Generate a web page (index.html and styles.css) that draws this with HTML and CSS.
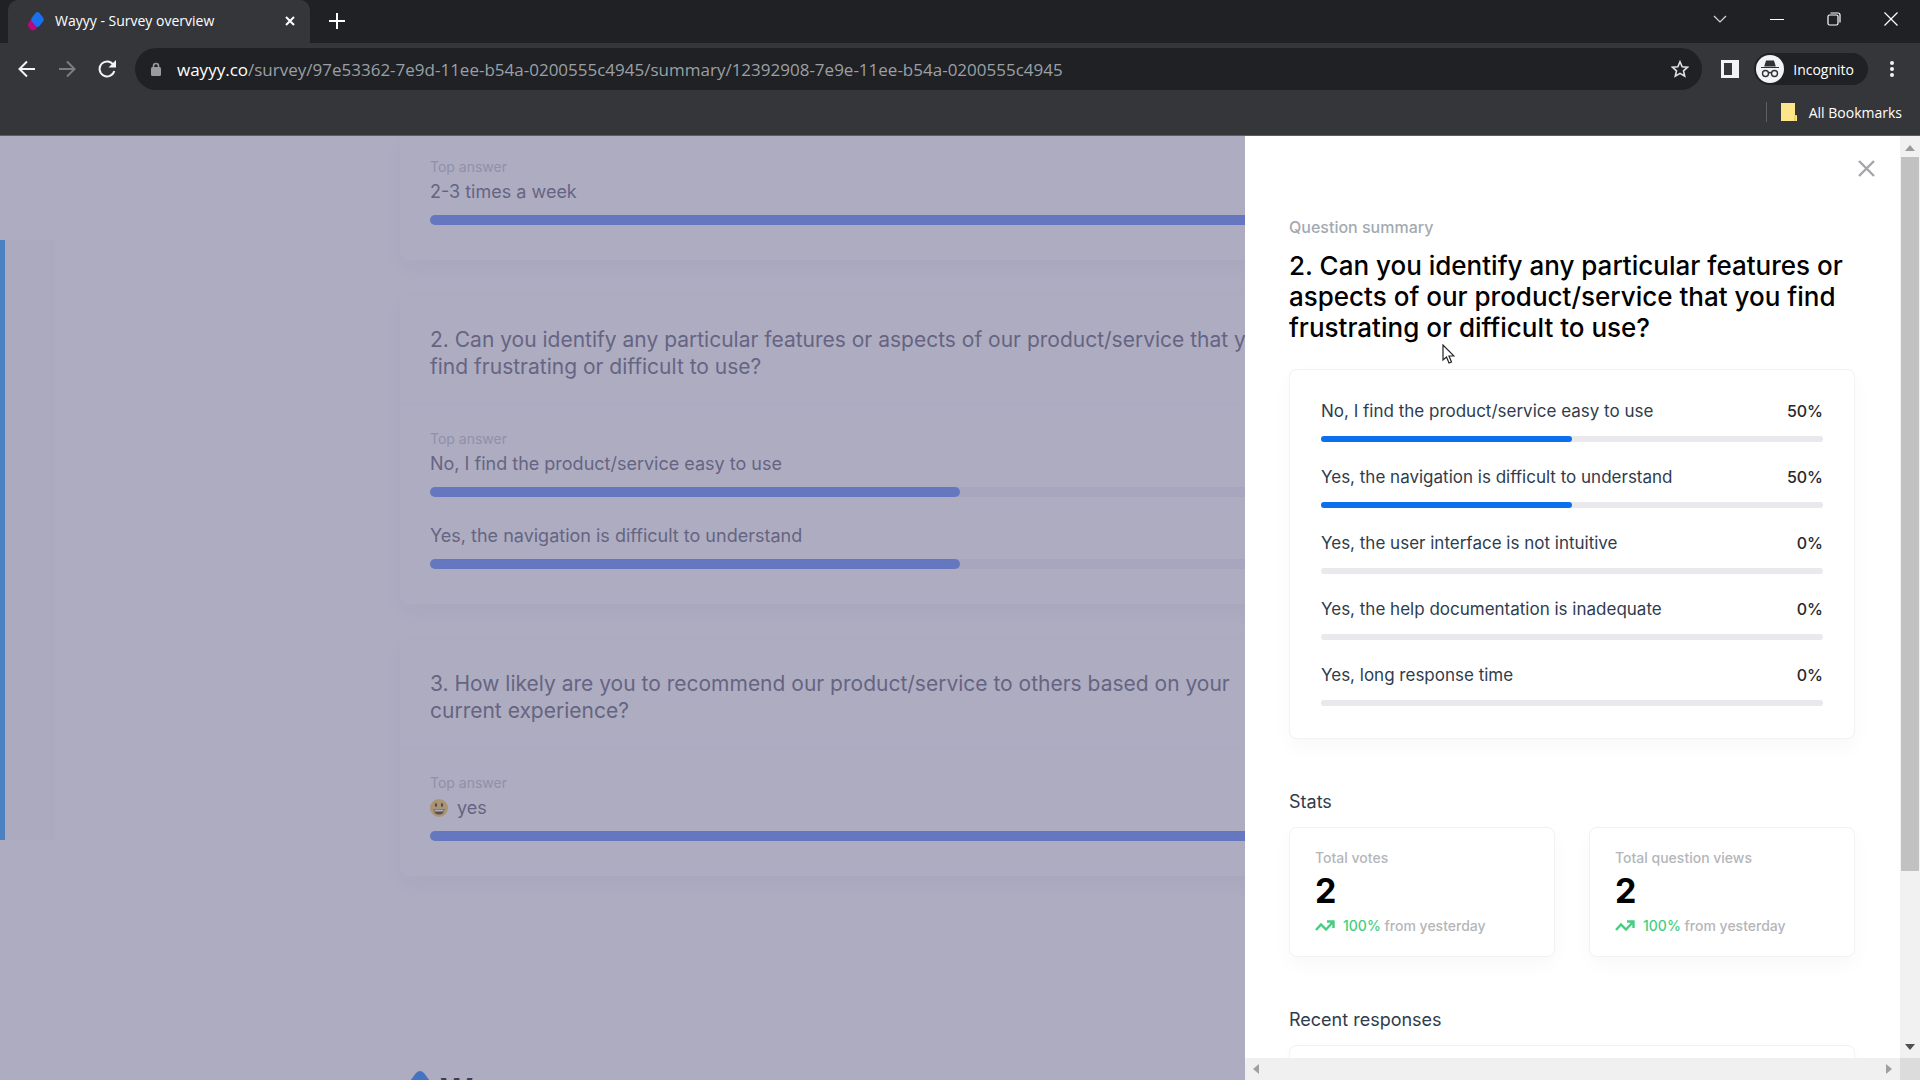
FILE: index.html
```html
<!DOCTYPE html>
<html lang="en">
<head>
<meta charset="utf-8">
<title>Wayyy - Survey overview</title>
<link rel="stylesheet" href="styles.css">
</head>
<body>
<header class="browser">
  <div class="tabs">
    <div class="tab">
      <svg class="tab-icon" width="20" height="20" viewBox="0 0 20 20"><path d="M2 13 L6 7 L12 14 L10 18 Q8 20 6 19 Q2 17 2 13Z" fill="#c2047f"/><path d="M9.500 2 Q11.500 0 13.500 2 L17 6.500 Q18.500 8.500 17 10.500 L13.500 15 Q11.500 17 9.500 15 L6 10.500 Q4.500 8.500 6 6.500Z" fill="#1a6ff0"/></svg>
      <span class="tab-title">Wayyy - Survey overview</span>
      <button class="icon-btn" aria-label="Close tab"><svg width="10" height="10" viewBox="0 0 10 10" stroke="#fff" stroke-width="2"><path d="M1 1l8 8M9 1l-8 8"/></svg></button>
    </div>
    <button class="icon-btn new-tab" aria-label="New tab"><svg width="16" height="16" viewBox="0 0 16 16" stroke="#fff" stroke-width="2"><path d="M8 0v16M0 8h16"/></svg></button>
    <div class="window-controls">
      <button class="icon-btn" aria-label="Search tabs"><svg width="14" height="14" viewBox="0 0 14 14" fill="none" stroke="#d8d8d8" stroke-width="1.2"><path d="M1 4l6 6 6-6"/></svg></button>
      <button class="icon-btn" aria-label="Minimize"><svg width="14" height="14" viewBox="0 0 14 14" stroke="#fff"><path d="M0 7.500h14"/></svg></button>
      <button class="icon-btn" aria-label="Restore"><svg width="14" height="14" viewBox="0 0 14 14" fill="none" stroke="#fff" stroke-width="1.200"><rect x="1" y="3" width="10" height="10" rx="1.500"/><path d="M3.500 1H11q2 0 2 2v7.500"/></svg></button>
      <button class="icon-btn" aria-label="Close"><svg width="14" height="14" viewBox="0 0 14 14" stroke="#fff" stroke-width="1.200"><path d="M.5.5l13 13M13.500.5l-13 13"/></svg></button>
    </div>
  </div>
  <div class="toolbar">
    <button class="icon-btn" aria-label="Back"><svg width="18" height="18" viewBox="0 0 18 18" fill="none" stroke="#f1f3f4" stroke-width="2"><path d="M17 9H2M9 1.500L1.500 9 9 16.500"/></svg></button>
    <button class="icon-btn" aria-label="Forward"><svg width="18" height="18" viewBox="0 0 18 18" fill="none" stroke="#7c7d80" stroke-width="2"><path d="M1 9h15M9 1.500L16.500 9 9 16.500"/></svg></button>
    <button class="icon-btn" aria-label="Reload"><svg width="18" height="18" viewBox="0 0 18 18" fill="none" stroke="#f1f3f4" stroke-width="2"><path d="M15.500 5A7.500 7.500 0 1 0 16.300 11"/><path d="M18 0v7.500h-7.500z" fill="#f1f3f4" stroke="none"/></svg></button>
    <div class="omnibox">
      <svg width="10" height="14" viewBox="0 0 10 14"><rect y="5" width="10" height="9" rx="1.500" fill="#9a9b9e"/><path d="M2.500 6V4a2.500 2.500 0 0 1 5 0v2" fill="none" stroke="#9a9b9e" stroke-width="1.600"/></svg>
      <span class="url"><b>wayyy.co</b>/survey/97e53362-7e9d-11ee-b54a-0200555c4945/summary/12392908-7e9e-11ee-b54a-0200555c4945</span>
      <button class="icon-btn" aria-label="Bookmark this page"><svg width="18" height="18" viewBox="0 0 20 20" fill="none" stroke="#e0e1e3" stroke-width="1.800"><path d="M10 2l2.400 5.500 6 .5-4.500 4 1.300 5.900L10 14.800 4.800 17.900l1.300-5.900L1.600 8l6-.5z"/></svg></button>
    </div>
    <button class="icon-btn" aria-label="Side panel"><svg width="18" height="18" viewBox="0 0 18 18"><path d="M0 0h18v18H0zM3 3v12h8V3z" fill="#f1f3f4" fill-rule="evenodd"/></svg></button>
    <button class="profile">
      <svg width="28" height="28" viewBox="0 0 28 28"><circle cx="14" cy="14" r="14" fill="#f1f3f4"/><path d="M5 12.500h18M9 11l1.500-5h7l1.500 5z" fill="#303134" stroke="#303134" stroke-width="1.200"/><g fill="none" stroke="#303134" stroke-width="1.400"><circle cx="9.500" cy="18.500" r="3"/><circle cx="18.500" cy="18.500" r="3"/><path d="M12.500 18q1.500-1 3 0"/></g></svg>
      Incognito
    </button>
    <button class="icon-btn menu" aria-label="Menu"><svg width="4" height="16" viewBox="0 0 4 16" fill="#f1f3f4"><circle cx="2" cy="2" r="2"/><circle cx="2" cy="8" r="2"/><circle cx="2" cy="14" r="2"/></svg></button>
  </div>
  <div class="bookmarks">
    <button class="all-bookmarks">
      <svg width="16" height="18" viewBox="0 0 16 18"><path d="M0 0h14v12h1q1 0 1 1v5H0z" fill="#fde68a"/><path d="M14 12v6" stroke="#e0bd4c"/></svg>
      All Bookmarks
    </button>
  </div>
</header>

<div class="viewport">
  <main class="page">
    <aside class="side-tab"></aside>
    <div class="survey">
      <section class="card card-first">
        <div class="answers">
          <p class="hint">Top answer</p>
          <div class="answer"><span>2-3 times a week</span><div class="track"><div class="fill" style="width:100%"></div></div></div>
        </div>
      </section>
      <section class="card">
        <h2>2. Can you identify any particular features or aspects of our product/service that you find frustrating or difficult to use?</h2>
        <div class="answers">
          <p class="hint">Top answer</p>
          <div class="answer"><span>No, I find the product/service easy to use</span><div class="track"><div class="fill" style="width:50%"></div></div></div>
          <div class="answer"><span>Yes, the navigation is difficult to understand</span><div class="track"><div class="fill" style="width:50%"></div></div></div>
        </div>
      </section>
      <section class="card">
        <h2>3. How likely are you to recommend our product/service to others based on your current experience?</h2>
        <div class="answers">
          <p class="hint">Top answer</p>
          <div class="answer"><span class="with-emoji"><svg width="18" height="18" viewBox="0 0 18 18"><circle cx="9" cy="9" r="9" fill="#f5cf62"/><ellipse cx="6" cy="6" rx="1.200" ry="2" fill="#5a4520"/><ellipse cx="12" cy="6" rx="1.200" ry="2" fill="#5a4520"/><path d="M3.500 10h11q-.5 5.500-5.500 5.500T3.500 10z" fill="#5a4520"/><path d="M4.500 10.500h9v2h-9z" fill="#fff"/></svg>yes</span><div class="track"><div class="fill" style="width:100%"></div></div></div>
        </div>
      </section>
      <footer class="brand">
        <svg width="24" height="30" viewBox="0 0 24 30"><path d="M0 18l8-8 10 12-5 8H6q-6-4-6-12z" fill="#c2047f"/><path d="M8 2q4-4 8 0l6 8q3 3 0 6l-7 8q-3 2-6 0l-7-8q-2-3 0-6z" fill="#2f8cff"/></svg>
        <span>Wayyy</span>
      </footer>
    </div>
  </main>
  <div class="overlay"></div>

  <aside class="drawer">
    <div class="drawer-scroll">
      <div class="drawer-head"><button class="icon-btn" aria-label="Close summary"><svg width="17" height="17" viewBox="0 0 17 17" stroke="#a3a5a8" stroke-width="2.400"><path d="M1 1l15 15M16 1L1 16"/></svg></button></div>
      <div class="drawer-body">
        <p class="eyebrow">Question summary</p>
        <h1>2. Can you identify any particular features or aspects of our product/service that you find frustrating or difficult to use?</h1>
        <section class="box results">
          <div class="result"><span>No, I find the product/service easy to use</span><b>50%</b><div class="track"><div class="fill" style="width:50%"></div></div></div>
          <div class="result"><span>Yes, the navigation is difficult to understand</span><b>50%</b><div class="track"><div class="fill" style="width:50%"></div></div></div>
          <div class="result"><span>Yes, the user interface is not intuitive</span><b>0%</b><div class="track"></div></div>
          <div class="result"><span>Yes, the help documentation is inadequate</span><b>0%</b><div class="track"></div></div>
          <div class="result"><span>Yes, long response time</span><b>0%</b><div class="track"></div></div>
        </section>
        <h3>Stats</h3>
        <div class="stats">
          <section class="box stat">
            <p class="stat-label">Total votes</p>
            <p class="stat-value">2</p>
            <p class="trend"><svg width="20" height="12" viewBox="0 0 20 12" fill="none" stroke="#46ce80" stroke-width="2.400"><path d="M1 10l5-5.500 5 5L18 2M12 1.500h6.500V8"/></svg><span><em>100%</em> from yesterday</span></p>
          </section>
          <section class="box stat">
            <p class="stat-label">Total question views</p>
            <p class="stat-value">2</p>
            <p class="trend"><svg width="20" height="12" viewBox="0 0 20 12" fill="none" stroke="#46ce80" stroke-width="2.400"><path d="M1 10l5-5.500 5 5L18 2M12 1.500h6.500V8"/></svg><span><em>100%</em> from yesterday</span></p>
          </section>
        </div>
        <h3>Recent responses</h3>
        <section class="box responses"></section>
      </div>
    </div>
    <div class="vbar">
      <svg width="10" height="6" viewBox="0 0 10 6"><path d="M5 0l5 6H0z" fill="#9a9a9a"/></svg>
      <div class="vbar-track"><div class="thumb"></div></div>
      <svg width="10" height="6" viewBox="0 0 10 6"><path d="M5 6l5-6H0z" fill="#505050"/></svg>
    </div>
    <div class="hbar">
      <svg width="6" height="10" viewBox="0 0 6 10"><path d="M0 5l6-5v10z" fill="#a0a0a0"/></svg>
      <svg width="6" height="10" viewBox="0 0 6 10"><path d="M6 5L0 0v10z" fill="#a0a0a0"/></svg>
    </div>
    <div class="corner"></div>
  </aside>
  <svg class="cursor" width="13" height="20" viewBox="0 0 13 20"><path d="M1 1v15l3.500-3 2.500 6 2.500-1-2.500-6H12z" fill="#fff" stroke="#222" stroke-width="1.200"/></svg>
</div>
</body>
</html>
```
FILE: styles.css
```css
* { box-sizing: border-box; }
body {
  margin: 0;
  height: 100vh;
  display: flex;
  flex-direction: column;
  overflow: hidden;
  font-family: Inter, sans-serif;
}
p, h1, h2, h3 { margin: 0; font-weight: 400; }
svg { display: block; flex: none; }
button { border: 0; padding: 0; background: none; font: inherit; color: inherit; }

/* Browser chrome */
.browser {
  flex: none;
  background: #35363a;
  color: #fff;
  font-family: "Open Sans", sans-serif;
  font-size: 14px;
  border-bottom: 1px solid #5d5d63;
}
.icon-btn { display: grid; place-items: center; width: 24px; height: 24px; flex: none; }
.tabs { display: flex; height: 43px; background: #202124; padding-left: 8px; }
.tab {
  display: flex;
  align-items: center;
  width: 302px;
  padding: 0 8px 2px 18px;
  background: #35363a;
  border-radius: 10px 10px 0 0;
}
.tab-title { flex: 1; margin-left: 9px; }
.new-tab { margin: 9px 0 0 15px; }
.window-controls { display: flex; gap: 33px; margin-left: auto; padding: 7px 17px 0 0; }
.toolbar {
  display: flex;
  align-items: center;
  height: 52px;
  padding: 0 16px 0 15px;
}
.toolbar > .icon-btn + .icon-btn { margin-left: 16px; }
.omnibox {
  flex: 1;
  display: flex;
  align-items: center;
  height: 42px;
  margin: 0 16px;
  padding: 0 10px 0 16px;
  border-radius: 21px;
  background: #202124;
  color: #9aa0a6;
}
.url { flex: 1; margin-left: 16px; font-size: 17px; white-space: nowrap; overflow: hidden; }
.url b { font-weight: 400; color: #fff; }
.profile {
  display: flex;
  align-items: center;
  gap: 9px;
  height: 32px;
  margin: 0 12px 0 12px;
  padding: 0 14px 0 2px;
  border-radius: 16px;
  background: #202124;
}
.bookmarks { display: flex; justify-content: flex-end; align-items: center; height: 40px; padding: 0 18px 6px 0; }
.all-bookmarks {
  display: flex;
  align-items: center;
  gap: 12px;
  height: 20px;
  padding-left: 14px;
  border-left: 1px solid #5f6064;
}

/* Page behind the drawer */
.viewport { position: relative; flex: 1; min-height: 0; overflow: hidden; background: #fff; }
.page { position: relative; height: 100%; overflow: hidden; color: #6c6f80; }
.overlay { position: absolute; inset: 0; background: rgba(93, 89, 132, 0.5); }
.side-tab {
  position: absolute;
  left: 0;
  top: 104px;
  width: 55px;
  height: 600px;
  background: #fafafa;
  border-left: 5px solid #39a7ff;
}
.survey { display: flex; flex-direction: column; gap: 36px; width: 1120px; max-width: 100%; margin: 0 auto; }
.card { border-radius: 8px; background: #fff; box-shadow: 0 8px 24px rgba(20, 40, 60, 0.06); }
.card h2 {
  padding: 30px 225px 24px 30px;
  border-bottom: 1px solid #fafafc;
  font-size: 21px;
  line-height: 27px;
}
.answers { padding: 24px 30px 35px; }
.card-first .answers { padding-top: 21px; }
.hint { font-size: 14px; line-height: 20px; margin-bottom: 3px; color: #c4c6cc; }
.answer { font-size: 18px; line-height: 24px; }
.answer + .answer { margin-top: 27px; }
.answer .track { height: 10px; margin-top: 11px; border-radius: 5px; background: #f3f2f8; }
.answer .fill { background: #6b95fa; }
.with-emoji { display: flex; align-items: center; gap: 9px; }
.fill { height: 100%; border-radius: inherit; }
.brand { display: flex; gap: 8px; margin-top: 159px; padding-left: 8px; color: #1d1b30; font-size: 32px; line-height: 40px; font-weight: 700; }

/* Question drawer */
.drawer {
  position: absolute;
  inset: 0 0 0 auto;
  display: grid;
  grid-template: minmax(0, 1fr) 22px / minmax(0, 1fr) 20px;
  width: 675px;
  background: #fff;
}
.drawer-scroll { overflow: hidden; }
.drawer-head { display: flex; justify-content: flex-end; padding: 20px 22px 0; }
.drawer-body { padding: 36px 45px 0 44px; }
.eyebrow { font-size: 16px; line-height: 22px; font-weight: 500; color: #a3aab1; }
h1 { margin: 12px 0 26px; font-size: 26px; line-height: 31px; font-weight: 500; color: #000; }
.box { border: 1px solid #f2f2f3; border-radius: 8px; background: #fff; box-shadow: 0 8px 20px rgba(0, 0, 0, 0.03); }
.results { display: grid; gap: 24px; padding: 30px 31px 32px; }
.result { display: grid; grid-template-columns: 1fr auto; row-gap: 14px; font-size: 17px; line-height: 22px; color: #2f3c4d; }
.result b { font-size: 16px; font-weight: 500; color: #26282c; }
.result .track { grid-column: 1 / -1; height: 6px; border-radius: 3px; background: #e8e8ed; }
.result .fill { background: #0d6eee; }
h3 { margin: 51px 0 13px; font-size: 18px; line-height: 24px; color: #2f3c4d; }
.stats { display: grid; grid-template-columns: 1fr 1fr; gap: 34px; }
.stat { padding: 20px 25px; font-size: 14px; line-height: 20px; color: #b4b6b9; }
.stat-label, .trend { font-weight: 500; }
.stat-value { margin: 6px 0 8px; font-size: 34px; line-height: 34px; font-weight: 700; color: #000; }
.trend { display: flex; align-items: center; gap: 8px; }
.trend em { font-style: normal; color: #46ce80; }
.responses { height: 120px; }
.vbar { display: flex; flex-direction: column; align-items: center; gap: 6px; padding: 9px 0 8px; background: #f1f1f1; }
.vbar-track { flex: 1; width: 18px; }
.thumb { height: 81%; background: #c1c1c1; }
.hbar { display: flex; justify-content: space-between; align-items: center; padding: 0 8px; background: #f0f0f0; }
.corner { background: #dcdcdc; }
.cursor { position: absolute; left: 1442px; top: 208px; }
```
